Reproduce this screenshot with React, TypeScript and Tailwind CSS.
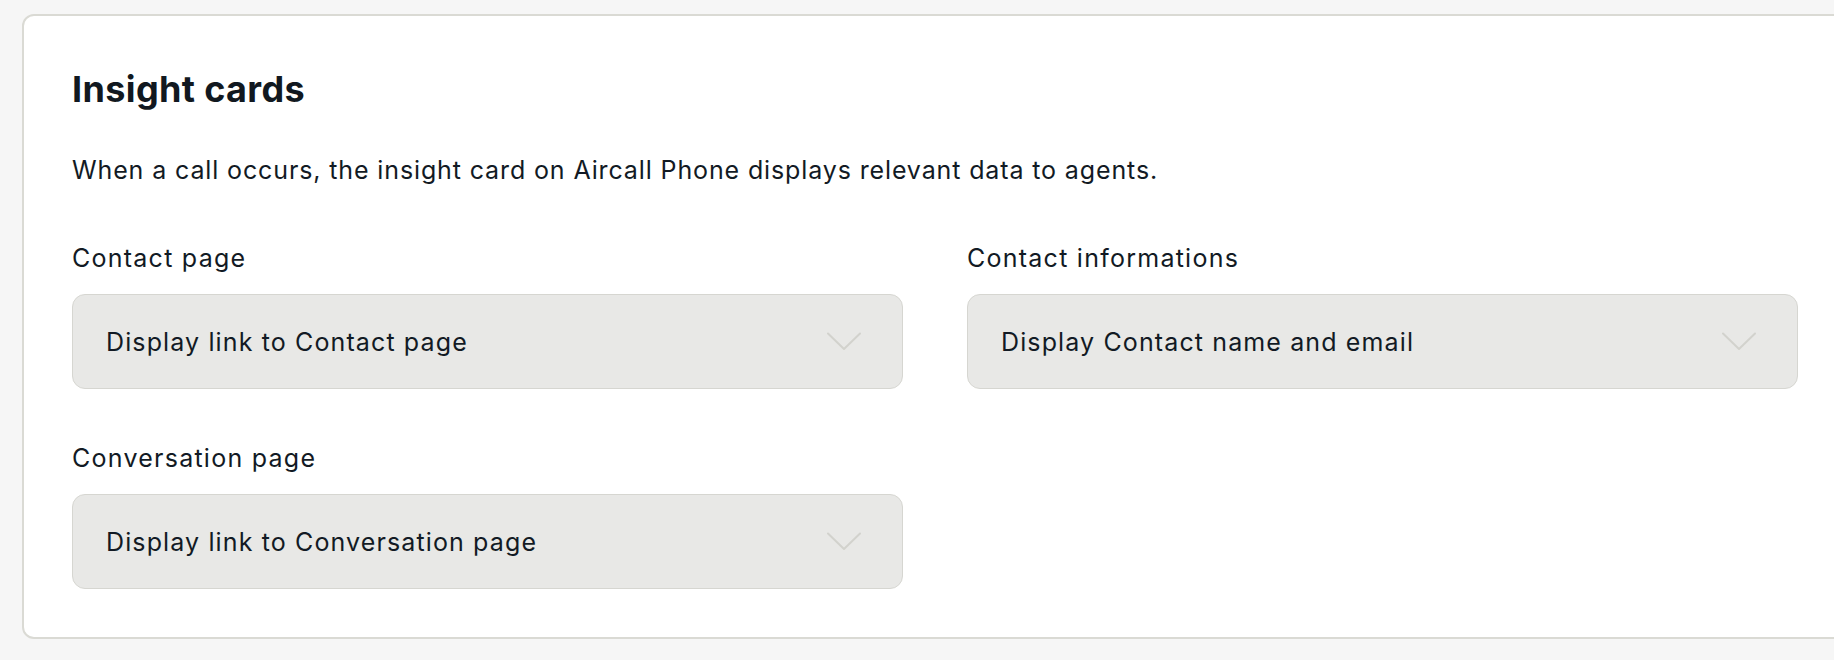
import React from "react";

type Field = {
  label: string;
  value: string;
};

const FIELDS: Field[] = [
  { label: "Contact page", value: "Display link to Contact page" },
  { label: "Contact informations", value: "Display Contact name and email" },
  { label: "Conversation page", value: "Display link to Conversation page" },
];

function Chevron() {
  return (
    <svg width="34" height="19" viewBox="0 0 34 19" fill="none" className="shrink-0">
      <polyline
        points="1,1.5 17,17 33,1.5"
        stroke="#d2d2cd"
        strokeWidth="2"
        strokeLinecap="round"
        strokeLinejoin="round"
      />
    </svg>
  );
}

function SelectField({ field }: { field: Field }) {
  return (
    <div className="flex flex-col">
      <label className="h-[30px] text-[25px] leading-[30px] tracking-[0.05em] text-[#121a24]">
        {field.label}
      </label>
      <button
        type="button"
        className="mt-[21px] flex h-[95px] items-center justify-between rounded-[13px] border-[1.5px] border-[#d6d6d1] bg-[#e8e8e6] pl-[33px] pr-[41px] text-left"
      >
        <span className="text-[25px] leading-[30px] tracking-[0.045em] text-[#121a24]">{field.value}</span>
        <Chevron />
      </button>
    </div>
  );
}

export default function App() {
  return (
    <div
      className="h-[660px] w-[1834px] overflow-hidden bg-[#f6f6f6] pl-[22px] pt-[14px]"
      style={{ fontFamily: "Inter, 'Noto Sans', sans-serif" }}
    >
      <section className="w-[1826px] rounded-[12px] border-2 border-[#dadad4] bg-white px-[48px] pb-[48px] pt-[53px]">
        <h2 className="text-[36px] font-bold leading-[40px] tracking-[0.01em] text-[#111820]">Insight cards</h2>
        <p className="mt-[46px] text-[25px] leading-[30px] tracking-[0.035em] text-[#121a24]">
          When a call occurs, the insight card on Aircall Phone displays relevant data to agents.
        </p>

        {/* Insight card options */}
        <div className="mt-[58px] grid grid-cols-2 gap-x-[64px] gap-y-[54px]">
          {FIELDS.map((field) => (
            <SelectField key={field.label} field={field} />
          ))}
        </div>
      </section>
    </div>
  );
}
